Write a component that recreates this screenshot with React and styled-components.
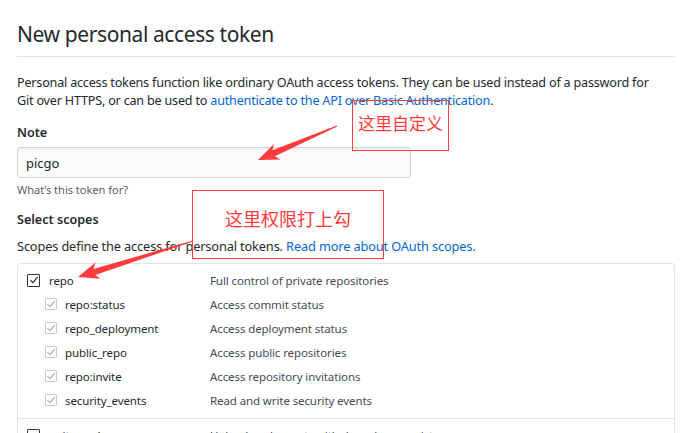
import React from 'react';
import styled, { createGlobalStyle } from 'styled-components';

const GlobalStyle = createGlobalStyle`
  html, body {
    margin: 0;
    padding: 0;
    background: #fff;
  }
  body {
    font-family: "Noto Sans", "Open Sans", sans-serif;
    color: #24292e;
    -webkit-font-smoothing: antialiased;
  }
`;

const Page = styled.div`
  position: relative;
  width: 658px;
  padding: 20px 12px 0 17px;
  height: 413px;
  overflow: hidden;
`;

const Subhead = styled.div`
  padding-bottom: 8px;
  border-bottom: 1px solid #e1e4e8;
`;

const Heading = styled.h2`
  margin: 0;
  font-size: 21px;
  font-weight: 400;
  line-height: 28px;
  letter-spacing: -0.4px;
  color: #24292e;
`;

const Lead = styled.p`
  margin: 17px 0 0;
  font-size: 12.6px;
  line-height: 18px;
  letter-spacing: -0.2px;
  white-space: nowrap;
  color: #24292e;
`;

const A = styled.a`
  color: #0366d6;
  text-decoration: none;
`;

const Label = styled.div`
  margin-top: ${(p) => p.$top}px;
  font-size: 12.6px;
  font-weight: 600;
  line-height: 20px;
`;

const Input = styled.div`
  margin-top: 4px;
  width: 394px;
  height: 31px;
  box-sizing: border-box;
  padding: 0 8px;
  display: flex;
  align-items: center;
  background: #fafbfc;
  border: 1px solid #d1d5da;
  border-radius: 3px;
  box-shadow: inset 0 1px 2px rgba(27, 31, 35, 0.075);
  font-size: 13px;
  color: #24292e;
`;

const Hint = styled.div`
  margin-top: 3px;
  font-size: 11px;
  line-height: 18px;
  color: #586069;
`;

const Note = styled.div`
  margin-top: 7px;
  font-size: 12.8px;
  line-height: 18px;
  letter-spacing: -0.15px;
`;

const ScopeBox = styled.div`
  margin-top: 8px;
  border: 1px solid #e1e4e8;
  border-radius: 3px;
`;

const Group = styled.div`
  padding: 4px 9px 6px;
  & + & {
    border-top: 1px solid #e1e4e8;
  }
`;

const Row = styled.div`
  display: grid;
  grid-template-columns: 183px 1fr;
  align-items: center;
  height: 24px;
  font-size: 11.5px;
  letter-spacing: -0.1px;
`;

const Name = styled.div`
  display: flex;
  align-items: center;
  gap: ${(p) => (p.$child ? 8 : 9)}px;
  padding-left: ${(p) => (p.$child ? 18 : 0)}px;
  color: #24292e;
`;

const Desc = styled.div`
  color: #444d56;
`;

const Box = styled.span`
  display: inline-flex;
  align-items: center;
  justify-content: center;
  width: ${(p) => (p.$child ? 12 : 13)}px;
  height: ${(p) => (p.$child ? 12 : 13)}px;
  box-sizing: border-box;
  border: 1px solid ${(p) => (p.$child ? '#c9c9c9' : '#333')};
  border-radius: 1px;
  background: #fff;
  flex: none;
`;

const Overlay = styled.svg`
  position: absolute;
  left: 0;
  top: 0;
  pointer-events: none;
`;

const Callout = styled.div`
  position: absolute;
  box-sizing: border-box;
  border: 1px solid #ff3d3d;
  display: flex;
  align-items: center;
  justify-content: center;
  color: #ff3b3b;
  font-family: "Noto Sans CJK SC", "Noto Sans", sans-serif;
  font-size: ${(p) => p.$size}px;
  padding-bottom: ${(p) => p.$lift || 0}px;
`;

const Checkbox = ({ child, checked = true }) => (
  <Box $child={child}>
    {checked && (
      <svg width="10" height="10" viewBox="0 0 10 10">
        <path
          d="M1.5 5.2 L4 7.6 L8.6 2"
          fill="none"
          stroke={child ? '#b3b3b3' : '#333'}
          strokeWidth="1.2"
        />
      </svg>
    )}
  </Box>
);

const arrowPoints = (tx, ty, hx, hy) => {
  const dx = hx - tx;
  const dy = hy - ty;
  const L = Math.hypot(dx, dy);
  const ux = dx / L;
  const uy = dy / L;
  const nx = -uy;
  const ny = ux;
  const P = (a, o) => `${(tx + ux * a + nx * o).toFixed(1)},${(ty + uy * a + ny * o).toFixed(1)}`;
  return [P(0, 0.4), P(L - 17, 3.2), P(L - 21, 8.5), P(L, 0), P(L - 21, -8.5), P(L - 17, -3.2), P(0, -0.4)].join(' ');
};

const subScopes = [
  ['repo:status', 'Access commit status'],
  ['repo_deployment', 'Access deployment status'],
  ['public_repo', 'Access public repositories'],
  ['repo:invite', 'Access repository invitations'],
  ['security_events', 'Read and write security events'],
];

export default function App() {
  return (
    <>
      <GlobalStyle />
      <Page>
        <Subhead>
          <Heading>New personal access token</Heading>
        </Subhead>
        <Lead>
          Personal access tokens function like ordinary OAuth access tokens. They can be used instead of a password for
          <br />
          Git over HTTPS, or can be used to <A href="#">authenticate to the API over Basic Authentication</A>.
        </Lead>
        <Label $top={13}>Note</Label>
        <Input>picgo</Input>
        <Hint>What’s this token for?</Hint>
        <Label $top={11}>Select scopes</Label>
        <Note>
          Scopes define the access for personal tokens. <A href="#">Read more about OAuth scopes.</A>
        </Note>
        <ScopeBox>
          <Group>
            <Row>
              <Name>
                <Checkbox />
                repo
              </Name>
              <Desc>Full control of private repositories</Desc>
            </Row>
            {subScopes.map(([name, desc]) => (
              <Row key={name}>
                <Name $child>
                  <Checkbox child />
                  {name}
                </Name>
                <Desc>{desc}</Desc>
              </Row>
            ))}
          </Group>
          <Group>
            <Row>
              <Name>
                <Checkbox checked={false} />
                write:packages
              </Name>
              <Desc>Upload packages to github package registry</Desc>
            </Row>
          </Group>
        </ScopeBox>

        <Callout $size={17} $lift={6} style={{ left: 352, top: 100, width: 97, height: 51 }}>
          这里自定义
        </Callout>
        <Callout $size={18} $lift={14} style={{ left: 192, top: 190, width: 192, height: 69 }}>
          这里权限打上勾
        </Callout>
        <Overlay width="687" height="433">
          <polygon points={arrowPoints(337, 126, 258, 160)} fill="#ff3b3b" />
          <polygon points={arrowPoints(193, 241, 78, 277)} fill="#ff3b3b" />
        </Overlay>
      </Page>
    </>
  );
}
